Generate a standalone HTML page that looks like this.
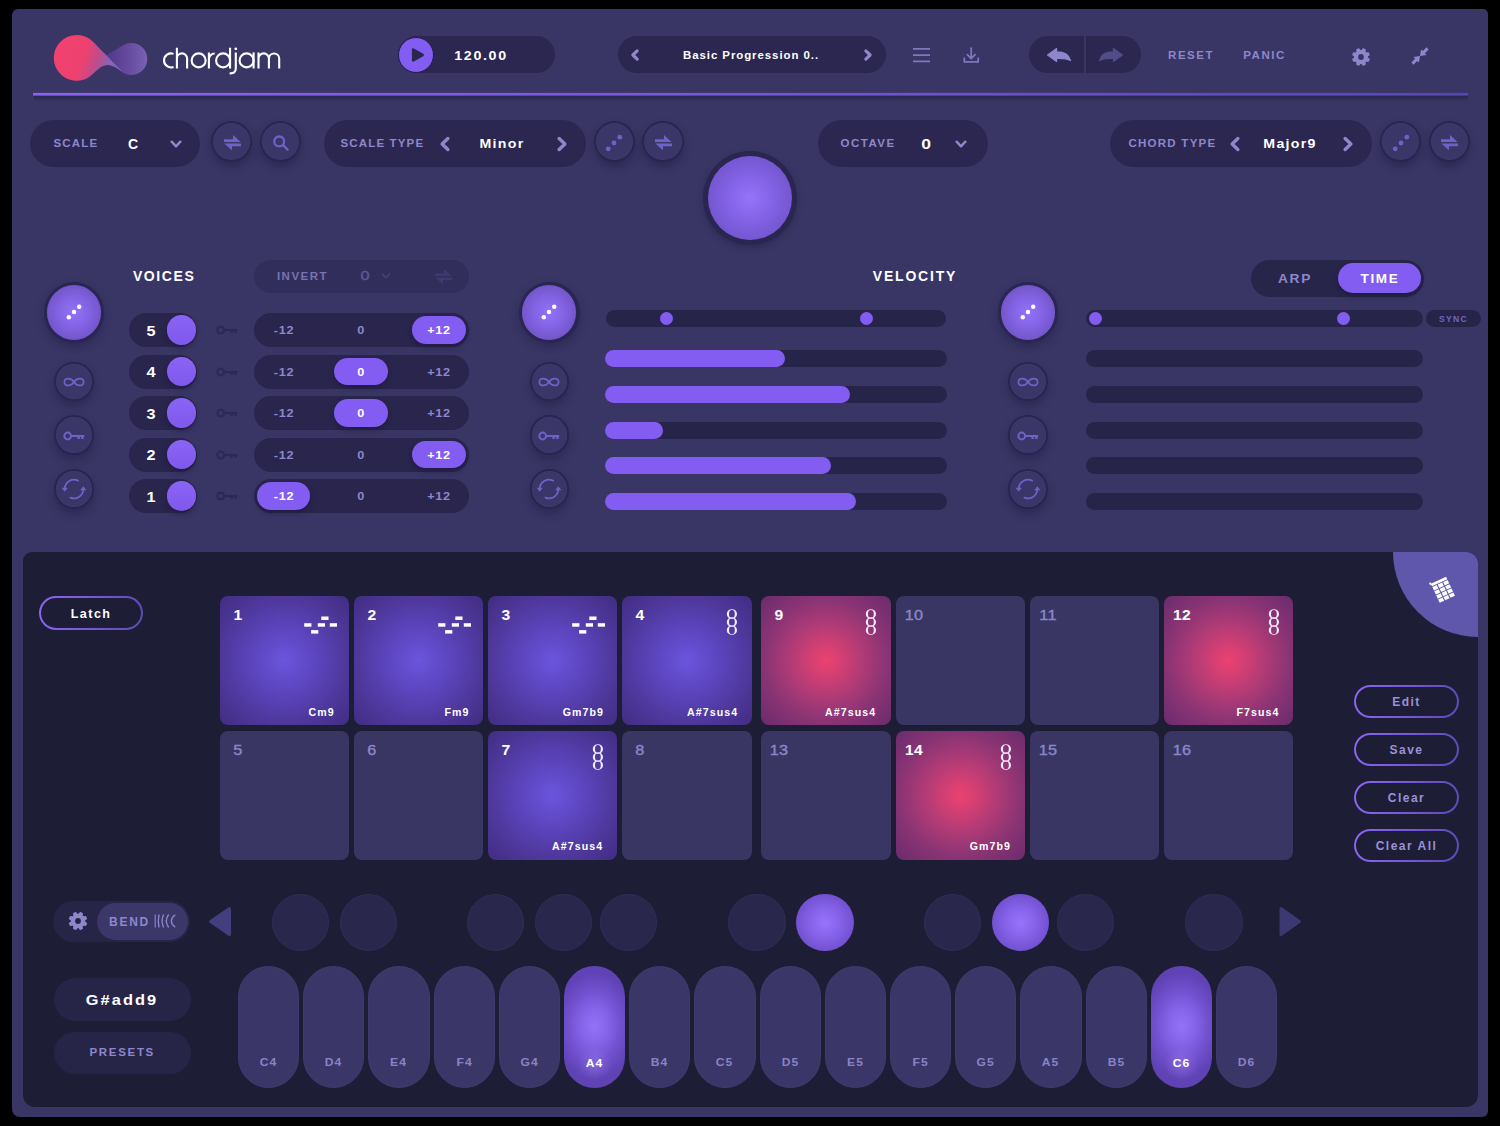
<!DOCTYPE html><html><head><meta charset="utf-8"><title>chordjam</title><style>
*{box-sizing:border-box;margin:0;padding:0}
html,body{width:1500px;height:1126px;background:#000;overflow:hidden}
body{position:relative;font-family:"Liberation Sans",sans-serif;color:#fff}
.abs{position:absolute}
#win{position:absolute;left:12px;top:9px;width:1476px;height:1108px;background:#393665;border-radius:6px 5px 6px 8px}
.pill{position:absolute;background:#2b2750;border-radius:100px}
.t{position:absolute;white-space:nowrap;font-weight:bold;line-height:1;transform:translate(-50%,-50%)}
.tl{position:absolute;white-space:nowrap;font-weight:bold;line-height:1;transform:translate(0,-50%)}
.mut{color:#8e87cc}
.rb{position:absolute;border-radius:50%;background:#292551;box-shadow:0 5px 9px rgba(28,24,62,.42)}
.rb i{position:absolute;left:2.1px;top:2.1px;right:2.1px;bottom:2.1px;border-radius:50%;background:#3a3667;box-shadow:inset 0 0 0 1px rgba(72,67,122,.3)}
.bigb{position:absolute;border-radius:50%;background:#2a2652;box-shadow:0 4px 8px rgba(28,24,62,.38)}
.bigb i{position:absolute;left:3.2px;top:3.2px;right:3.2px;bottom:3.2px;border-radius:50%;background:radial-gradient(circle at 50% 50%,#9371f9 0%,#8565e6 35%,#7557cd 68%,#664bb6 100%)}
.acc{background:#835cf1}
.bar{position:absolute;background:#27244a;border-radius:100px;height:17px}
.fill{position:absolute;background:#835cf1;border-radius:100px;height:17px}
.pad{position:absolute;width:129.4px;height:129.2px;border-radius:8px;background:#393664}
.pad.p{background:radial-gradient(circle at 50% 50%,#6b55dd 0%,#5c45be 35%,#4e389c 68%,#402d82 100%)}
.pad.r{background:radial-gradient(circle at 50% 50%,#eb4270 0%,#d43f73 17%,#b03b76 40%,#8b3474 66%,#6a2b6d 100%)}
.pad .n{position:absolute;left:18px;top:19px;transform:translate(-50%,-50%) scaleX(1.12);line-height:1;font-size:14.5px;letter-spacing:.3px;color:#8d87c9;-webkit-text-stroke:.35px #8d87c9;white-space:nowrap}
.pad.p .n,.pad.r .n{color:#fff;font-weight:bold;font-size:14px;-webkit-text-stroke:0}
.pad .c{position:absolute;right:14px;bottom:7.4px;font-weight:bold;font-size:10px;letter-spacing:1px;color:#fff;transform-origin:100% 50%;transform:scaleX(1.06)}
.ob{position:absolute;border:2px solid transparent;background:linear-gradient(#1e1d36,#1e1d36) padding-box,linear-gradient(100deg,#8d67f3 0%,#7657dc 50%,#5d4bb4 100%) border-box;border-radius:100px;color:#9a92d8;font-weight:bold;font-size:12px;letter-spacing:1.5px;text-align:center}
.bk{position:absolute;width:57.4px;height:57.4px;border-radius:50%;background:#2a274d;border:1px solid #302d57}
.bk.on{border:none;background:radial-gradient(circle at 50% 50%,#9673fb 0%,#8562e8 38%,#7150d0 72%,#5f43b3 100%)}
.wk{position:absolute;width:61.2px;height:121.5px;border-radius:31px;background:#3a3668;border:1px solid #3f3b6e;top:966px}
.wk.on{border:none;background:radial-gradient(circle 17px at 50% 80%,rgba(170,150,235,.32),rgba(170,150,235,0) 100%),radial-gradient(ellipse 40px 54px at 50% 49%,#9472f8 0%,#8563e8 35%,#7251d0 65%,#5f42b4 100%)}
.wk span{position:absolute;left:0;right:0;bottom:18.6px;transform:scaleX(1.1);text-align:center;font-weight:bold;font-size:11px;letter-spacing:1px;color:#8a83c6}
.wk.on span{color:#fff}
</style></head><body>
<div id="win"></div>
<svg class="abs" style="left:45px;top:25px" width="120" height="65" viewBox="45 25 120 65"><defs>
<linearGradient id="lgp" x1="55" x2="122" y1="47" y2="70" gradientUnits="userSpaceOnUse"><stop offset="0" stop-color="#f2426f"/><stop offset=".42" stop-color="#ee416f"/><stop offset=".62" stop-color="#c04c8a"/><stop offset=".8" stop-color="#8a63b4"/><stop offset="1" stop-color="#7b6cc4"/></linearGradient>
<linearGradient id="lgv" x1="106" x2="148" y1="0" y2="0" gradientUnits="userSpaceOnUse"><stop offset="0" stop-color="#4e378c"/><stop offset=".45" stop-color="#63479a"/><stop offset="1" stop-color="#7a62b4"/></linearGradient></defs>
<path d="M106.4 55.3L123 45.3A16 16 0 1 1 121 71.2Z" fill="url(#lgv)"/>
<path d="M89.8 39.1A22.9 22.9 0 1 0 89.2 77.1C95.5 72.5 100 65.3 107.3 65C114 65 117 69 122.5 71.6C117 67 112 61 106.4 55.3C100.5 49.7 95.3 43.5 89.8 39.1Z" fill="url(#lgp)"/></svg>
<svg class="abs" style="left:155px;top:40px" width="135" height="40" viewBox="155 40 135 40"><g fill="none" stroke="#fff" stroke-width="2.1">
<path d="M173.56 53.86A7 7 0 1 0 173.56 66.94"/>
<path d="M176.9 47.7V68.5M176.9 58.5A5.1 5.1 0 0 1 187.1 58.5V68.5"/>
<circle cx="198.65" cy="60.4" r="7"/>
<path d="M208.9 52.4V68.5M208.9 59.3A5.8 5.8 0 0 1 214.7 53.5"/>
<circle cx="223.1" cy="60.4" r="7"/><path d="M230.05 47.7V68.5"/>
<path d="M235.8 52.4V68.3C235.8 72.3 233.6 73.7 229.6 73.3"/>
<circle cx="246.6" cy="60.4" r="7"/><path d="M253.6 52.4V68.5"/>
<path d="M258.5 52.4V68.5M258.5 58.6A5.2 5.2 0 0 1 268.9 58.6V68.5M268.9 58.6A5.15 5.15 0 0 1 279.2 58.6V68.5"/>
</g><circle cx="235.8" cy="48.8" r="1.4" fill="#fff"/></svg>
<div class="abs" style="left:163px;top:43px;font-size:30px;line-height:34px;color:transparent;letter-spacing:-.6px">chordjam</div>
<div class="pill" style="left:398.4px;top:36.4px;width:156.60000000000002px;height:37.00000000000001px;"></div>
<div class="abs acc" style="left:398px;top:37px;width:36px;height:36px;border-radius:50%;border:1.5px solid #221e44"></div>
<svg class="abs" style="left:409px;top:46px" width="18" height="18" viewBox="0 0 18 18"><path d="M4.2 3.6L13.6 9L4.2 14.4Z" fill="#2a264f" stroke="#2a264f" stroke-width="2.6" stroke-linejoin="round"/></svg>
<div class="t" style="left:480.5px;top:54.8px;font-size:13px;letter-spacing:1.5px;color:#fff;transform:translate(-50%,-50%) scaleX(1.1);">120.00</div>
<div class="pill" style="left:618px;top:36.4px;width:268px;height:37.00000000000001px;"></div>
<svg class="abs" style="left:624.6px;top:45px" width="20" height="20" viewBox="-10 -10 20 20"><path d="M2.4 -4.6L-2.4 0L2.4 4.6" fill="none" stroke="#8e87cc" stroke-width="3.5" stroke-linecap="round" stroke-linejoin="round" transform="scale(0.9)"/></svg>
<svg class="abs" style="left:858.4px;top:45px" width="20" height="20" viewBox="-10 -10 20 20"><path d="M-2.4 -4.6L2.4 0L-2.4 4.6" fill="none" stroke="#8e87cc" stroke-width="3.5" stroke-linecap="round" stroke-linejoin="round" transform="scale(0.9)"/></svg>
<div class="t" style="left:751px;top:54.8px;font-size:11px;letter-spacing:0.9px;color:#fff;transform:translate(-50%,-50%) scaleX(1.04);">Basic Progression 0..</div>
<svg class="abs" style="left:912px;top:46px" width="20" height="18" viewBox="0 0 20 18"><g stroke="#7f78bf" stroke-width="1.7"><path d="M1 2.9H18M1 9.1H18M1 15.3H18"/></g></svg>
<svg class="abs" style="left:962px;top:45px" width="18" height="20" viewBox="0 0 18 20"><g stroke="#7f78bf" stroke-width="1.7" fill="none" stroke-linecap="round" stroke-linejoin="round"><path d="M9.2 3V13.4M5.3 9.6L9.2 13.6L13.1 9.6M2.3 13.2V16.9H16.2V13.2"/></g></svg>
<div class="pill" style="left:1028.8px;top:36.4px;width:112.40000000000009px;height:36.9px;"></div>
<div class="abs" style="left:1084.2px;top:36px;width:1.8px;height:38px;background:#393665"></div>
<svg class="abs" style="left:1046px;top:45px" width="26" height="20" viewBox="0 0 26 20"><path d="M1.6 10L10.6 3.6V6.8C18 6.8 23.3 10 24.6 15.6C21 13.6 17 13.2 10.6 13.4V16.4Z" fill="#8e87cc" stroke="#8e87cc" stroke-width="1.2" stroke-linejoin="round"/></svg>
<svg class="abs" style="left:1098px;top:45px" width="26" height="20" viewBox="0 0 26 20"><path d="M24.4 10L15.4 3.6V6.8C8 6.8 2.7 10 1.4 15.6C5 13.6 9 13.2 15.4 13.4V16.4Z" fill="#524c88" stroke="#524c88" stroke-width="1.2" stroke-linejoin="round"/></svg>
<div class="t" style="left:1191px;top:55.5px;font-size:11.5px;letter-spacing:1.5px;color:#8e87cc;">RESET</div>
<div class="t" style="left:1264.5px;top:55.5px;font-size:11.5px;letter-spacing:1.5px;color:#8e87cc;">PANIC</div>
<svg class="abs" style="left:1349.1px;top:44.5px" width="24" height="24" viewBox="-12 -12 24 24"><path d="M8.22 2.18L7.35 4.27L5.14 3.92L3.92 5.14L4.27 7.35L2.18 8.22L0.86 6.40L-0.86 6.40L-2.18 8.22L-4.27 7.35L-3.92 5.14L-5.14 3.92L-7.35 4.27L-8.22 2.18L-6.40 0.86L-6.40 -0.86L-8.22 -2.18L-7.35 -4.27L-5.14 -3.92L-3.92 -5.14L-4.27 -7.35L-2.18 -8.22L-0.86 -6.40L0.86 -6.40L2.18 -8.22L4.27 -7.35L3.92 -5.14L5.14 -3.92L7.35 -4.27L8.22 -2.18L6.40 -0.86L6.40 0.86Z" fill="#8e87cc" stroke="#8e87cc" stroke-width="1.1" stroke-linejoin="round"/><circle r="2.9" fill="#393665"/></svg>
<svg class="abs" style="left:1408px;top:44px" width="24" height="24" viewBox="0 0 24 24"><g fill="#8e87cc" transform="translate(12 12)"><path d="M0.00 0.00L1.06 -6.58L2.76 -4.88L6.58 -8.70L8.70 -6.58L4.88 -2.76L6.58 -1.06Z"/><path d="M-0.00 -0.00L-1.06 6.58L-2.76 4.88L-6.58 8.70L-8.70 6.58L-4.88 2.76L-6.58 1.06Z"/></g></svg>
<svg class="abs" style="left:30px;top:88px" width="1442" height="16" viewBox="0 0 1442 16"><defs><linearGradient id="tl" x1="0" x2="1"><stop offset="0" stop-color="#8a62f3"/><stop offset=".45" stop-color="#7856de"/><stop offset="1" stop-color="#5846b2"/></linearGradient><linearGradient id="ts" x1="0" x2="0" y1="0" y2="1"><stop offset="0" stop-color="#1c183c" stop-opacity=".6"/><stop offset="1" stop-color="#1c183c" stop-opacity="0"/></linearGradient></defs><rect x="4" y="7.2" width="1434" height="6.5" fill="url(#ts)"/><rect x="3" y="4.9" width="1435" height="2.7" fill="url(#tl)"/></svg>
<div class="pill" style="left:29.8px;top:120.4px;width:170.5px;height:46.400000000000006px;"></div>
<div class="tl" style="left:53.5px;top:144px;font-size:11.5px;letter-spacing:1.15px;color:#8e87cc;">SCALE</div>
<div class="t" style="left:133px;top:143.5px;font-size:14px;letter-spacing:0px;color:#fff;">C</div>
<svg class="abs" style="left:165.5px;top:133.5px" width="20" height="20" viewBox="-10 -10 20 20"><path d="M-4.6 -2.4L0 2.4L4.6 -2.4" fill="none" stroke="#8e87cc" stroke-width="2.6" stroke-linecap="round" stroke-linejoin="round" transform="scale(0.95)"/></svg>
<div class="rb" style="left:211.1px;top:121.0px;width:41.4px;height:41.4px"><i></i></div>
<svg class="abs" style="left:223.8px;top:134.9px" width="17" height="15.4" viewBox="0 0 17 15.4"><g fill="#6c63c8" opacity="1"><path d="M0 4.2H9V0L16.6 6.9H0z"/><path d="M17 11.2H8V15.4L0.4 8.5H17z"/></g></svg>
<div class="rb" style="left:260.1px;top:121.0px;width:41.4px;height:41.4px"><i></i></div>
<svg class="abs" style="left:269px;top:131px" width="24" height="24" viewBox="0 0 24 24"><g fill="none" stroke="#6c63c8" stroke-width="2.3" stroke-linecap="round"><circle cx="10.2" cy="10.4" r="4.9"/><path d="M14 14.2L18.6 18.6"/></g></svg>
<div class="pill" style="left:324px;top:120.4px;width:262px;height:46.400000000000006px;"></div>
<div class="tl" style="left:340.5px;top:144px;font-size:11.5px;letter-spacing:1.15px;color:#8e87cc;">SCALE TYPE</div>
<svg class="abs" style="left:434.5px;top:134px" width="20" height="20" viewBox="-10 -10 20 20"><path d="M2.4 -4.6L-2.4 0L2.4 4.6" fill="none" stroke="#8e87cc" stroke-width="2.8" stroke-linecap="round" stroke-linejoin="round" transform="scale(1.2)"/></svg>
<div class="t" style="left:501.5px;top:143.5px;font-size:13.5px;letter-spacing:1.2px;color:#fff;transform:translate(-50%,-50%) scaleX(1.05);">Minor</div>
<svg class="abs" style="left:551.5px;top:134px" width="20" height="20" viewBox="-10 -10 20 20"><path d="M-2.4 -4.6L2.4 0L-2.4 4.6" fill="none" stroke="#8e87cc" stroke-width="2.8" stroke-linecap="round" stroke-linejoin="round" transform="scale(1.2)"/></svg>
<div class="rb" style="left:593.5px;top:121.1px;width:41.4px;height:41.4px"><i></i></div>
<svg class="abs" style="left:602.2px;top:130.6px" width="24" height="24" viewBox="-12 -12 24 24"><g fill="#6c63c8"><circle cx="5.8" cy="-5.8" r="2.4"/><circle cx="0" cy="0" r="2.4"/><circle cx="-5.8" cy="5.8" r="2.4"/></g></svg>
<div class="rb" style="left:642.3px;top:121.1px;width:41.4px;height:41.4px"><i></i></div>
<svg class="abs" style="left:654.5px;top:134.9px" width="17" height="15.4" viewBox="0 0 17 15.4"><g fill="#6c63c8" opacity="1"><path d="M0 4.2H9V0L16.6 6.9H0z"/><path d="M17 11.2H8V15.4L0.4 8.5H17z"/></g></svg>
<div class="abs" style="left:703px;top:151px;width:94px;height:94px;border-radius:50%;background:#2a2650;box-shadow:0 3px 6px rgba(28,24,62,.35)"></div>
<div class="abs" style="left:708px;top:156px;width:84px;height:84px;border-radius:50%;background:radial-gradient(circle at 50% 50%,#9573fb 0%,#8564e8 35%,#7558d2 68%,#694cbc 100%)"></div>
<div class="pill" style="left:818px;top:120.4px;width:170.29999999999995px;height:46.400000000000006px;"></div>
<div class="tl" style="left:840.5px;top:144px;font-size:11.5px;letter-spacing:1.5px;color:#8e87cc;">OCTAVE</div>
<div class="t" style="left:925.8px;top:143.5px;font-size:14px;letter-spacing:0px;color:#fff;transform:translate(-50%,-50%) scaleX(1.25);">0</div>
<svg class="abs" style="left:950.5px;top:133.5px" width="20" height="20" viewBox="-10 -10 20 20"><path d="M-4.6 -2.4L0 2.4L4.6 -2.4" fill="none" stroke="#8e87cc" stroke-width="2.6" stroke-linecap="round" stroke-linejoin="round" transform="scale(0.95)"/></svg>
<div class="pill" style="left:1110px;top:120.4px;width:262px;height:46.400000000000006px;"></div>
<div class="tl" style="left:1128.5px;top:144px;font-size:11.5px;letter-spacing:1.25px;color:#8e87cc;">CHORD TYPE</div>
<svg class="abs" style="left:1225px;top:134px" width="20" height="20" viewBox="-10 -10 20 20"><path d="M2.4 -4.6L-2.4 0L2.4 4.6" fill="none" stroke="#8e87cc" stroke-width="2.8" stroke-linecap="round" stroke-linejoin="round" transform="scale(1.2)"/></svg>
<div class="t" style="left:1290px;top:143.5px;font-size:13.5px;letter-spacing:1.2px;color:#fff;transform:translate(-50%,-50%) scaleX(1.05);">Major9</div>
<svg class="abs" style="left:1337.5px;top:134px" width="20" height="20" viewBox="-10 -10 20 20"><path d="M-2.4 -4.6L2.4 0L-2.4 4.6" fill="none" stroke="#8e87cc" stroke-width="2.8" stroke-linecap="round" stroke-linejoin="round" transform="scale(1.2)"/></svg>
<div class="rb" style="left:1379.8px;top:121.1px;width:41.4px;height:41.4px"><i></i></div>
<svg class="abs" style="left:1388.5px;top:130.6px" width="24" height="24" viewBox="-12 -12 24 24"><g fill="#6c63c8"><circle cx="5.8" cy="-5.8" r="2.4"/><circle cx="0" cy="0" r="2.4"/><circle cx="-5.8" cy="5.8" r="2.4"/></g></svg>
<div class="rb" style="left:1428.8px;top:121.1px;width:41.4px;height:41.4px"><i></i></div>
<svg class="abs" style="left:1441.0px;top:134.9px" width="17" height="15.4" viewBox="0 0 17 15.4"><g fill="#6c63c8" opacity="1"><path d="M0 4.2H9V0L16.6 6.9H0z"/><path d="M17 11.2H8V15.4L0.4 8.5H17z"/></g></svg>
<div class="bigb" style="left:43.9px;top:282.1px;width:60.6px;height:60.6px"><i></i></div>
<svg class="abs" style="left:62.3px;top:300.4px" width="24" height="24" viewBox="-12 -12 24 24"><g fill="#fff"><circle cx="5.2" cy="-5.2" r="2.25"/><circle cx="0" cy="0" r="2.25"/><circle cx="-5.2" cy="5.2" r="2.25"/></g></svg>
<div class="rb" style="left:54.4px;top:361.8px;width:39.6px;height:39.6px"><i></i></div>
<svg class="abs" style="left:62.2px;top:374px" width="24" height="16" viewBox="-12 -8 24 16"><path d="M0 0C-2.5 -4.2 -9.6 -5 -9.6 0C-9.6 5 -2.5 4.2 0 0C2.5 -4.2 9.6 -5 9.6 0C9.6 5 2.5 4.2 0 0Z" fill="none" stroke="#6c63c8" stroke-width="1.75"/></svg>
<div class="rb" style="left:54.4px;top:415.1px;width:39.6px;height:39.6px"><i></i></div>
<svg class="abs" style="left:62.2px;top:427.6px" width="24" height="16" viewBox="-12 -8 24 16"><g fill="none" stroke="#6c63c8" stroke-width="2"><circle cx="-6.3" cy="0" r="3.4"/><path d="M-2.9 0H10.2"/><path d="M4.6 0.8V3.1M8.4 0.8V3.1" stroke-width="2.4"/></g></svg>
<div class="rb" style="left:54.4px;top:469.1px;width:39.6px;height:39.6px"><i></i></div>
<svg class="abs" style="left:61.2px;top:476.3px" width="26" height="26" viewBox="-13 -13 26 26"><g fill="none" stroke="#6c63c8" stroke-width="1.8" stroke-linecap="round"><path d="M4.2 -8.3A9.3 9.3 0 0 0 -9.3 -0.5"/><path d="M-3.6 8.6A9.3 9.3 0 0 0 9.3 0.5"/></g><g fill="#6c63c8"><path d="M-12.4 -1.2H-6.2L-9.3 2.8Z"/><path d="M12.4 1.2H6.2L9.3 -2.8Z"/></g></svg>
<div class="bigb" style="left:519.0px;top:282.1px;width:60.6px;height:60.6px"><i></i></div>
<svg class="abs" style="left:537.4px;top:300.4px" width="24" height="24" viewBox="-12 -12 24 24"><g fill="#fff"><circle cx="5.2" cy="-5.2" r="2.25"/><circle cx="0" cy="0" r="2.25"/><circle cx="-5.2" cy="5.2" r="2.25"/></g></svg>
<div class="rb" style="left:529.5px;top:361.8px;width:39.6px;height:39.6px"><i></i></div>
<svg class="abs" style="left:537.3px;top:374px" width="24" height="16" viewBox="-12 -8 24 16"><path d="M0 0C-2.5 -4.2 -9.6 -5 -9.6 0C-9.6 5 -2.5 4.2 0 0C2.5 -4.2 9.6 -5 9.6 0C9.6 5 2.5 4.2 0 0Z" fill="none" stroke="#6c63c8" stroke-width="1.75"/></svg>
<div class="rb" style="left:529.5px;top:415.1px;width:39.6px;height:39.6px"><i></i></div>
<svg class="abs" style="left:537.3px;top:427.6px" width="24" height="16" viewBox="-12 -8 24 16"><g fill="none" stroke="#6c63c8" stroke-width="2"><circle cx="-6.3" cy="0" r="3.4"/><path d="M-2.9 0H10.2"/><path d="M4.6 0.8V3.1M8.4 0.8V3.1" stroke-width="2.4"/></g></svg>
<div class="rb" style="left:529.5px;top:469.1px;width:39.6px;height:39.6px"><i></i></div>
<svg class="abs" style="left:536.3px;top:476.3px" width="26" height="26" viewBox="-13 -13 26 26"><g fill="none" stroke="#6c63c8" stroke-width="1.8" stroke-linecap="round"><path d="M4.2 -8.3A9.3 9.3 0 0 0 -9.3 -0.5"/><path d="M-3.6 8.6A9.3 9.3 0 0 0 9.3 0.5"/></g><g fill="#6c63c8"><path d="M-12.4 -1.2H-6.2L-9.3 2.8Z"/><path d="M12.4 1.2H6.2L9.3 -2.8Z"/></g></svg>
<div class="bigb" style="left:997.8px;top:282.1px;width:60.6px;height:60.6px"><i></i></div>
<svg class="abs" style="left:1016.1999999999998px;top:300.4px" width="24" height="24" viewBox="-12 -12 24 24"><g fill="#fff"><circle cx="5.2" cy="-5.2" r="2.25"/><circle cx="0" cy="0" r="2.25"/><circle cx="-5.2" cy="5.2" r="2.25"/></g></svg>
<div class="rb" style="left:1008.3px;top:361.8px;width:39.6px;height:39.6px"><i></i></div>
<svg class="abs" style="left:1016.0999999999999px;top:374px" width="24" height="16" viewBox="-12 -8 24 16"><path d="M0 0C-2.5 -4.2 -9.6 -5 -9.6 0C-9.6 5 -2.5 4.2 0 0C2.5 -4.2 9.6 -5 9.6 0C9.6 5 2.5 4.2 0 0Z" fill="none" stroke="#6c63c8" stroke-width="1.75"/></svg>
<div class="rb" style="left:1008.3px;top:415.1px;width:39.6px;height:39.6px"><i></i></div>
<svg class="abs" style="left:1016.0999999999999px;top:427.6px" width="24" height="16" viewBox="-12 -8 24 16"><g fill="none" stroke="#6c63c8" stroke-width="2"><circle cx="-6.3" cy="0" r="3.4"/><path d="M-2.9 0H10.2"/><path d="M4.6 0.8V3.1M8.4 0.8V3.1" stroke-width="2.4"/></g></svg>
<div class="rb" style="left:1008.3px;top:469.1px;width:39.6px;height:39.6px"><i></i></div>
<svg class="abs" style="left:1015.0999999999999px;top:476.3px" width="26" height="26" viewBox="-13 -13 26 26"><g fill="none" stroke="#6c63c8" stroke-width="1.8" stroke-linecap="round"><path d="M4.2 -8.3A9.3 9.3 0 0 0 -9.3 -0.5"/><path d="M-3.6 8.6A9.3 9.3 0 0 0 9.3 0.5"/></g><g fill="#6c63c8"><path d="M-12.4 -1.2H-6.2L-9.3 2.8Z"/><path d="M12.4 1.2H6.2L9.3 -2.8Z"/></g></svg>
<div class="t" style="left:164.2px;top:276px;font-size:14px;letter-spacing:1.6px;color:#fff;">VOICES</div>
<div class="pill" style="left:253.7px;top:259.6px;width:215.5px;height:33.599999999999966px;background:#322e5c"></div>
<div class="t" style="left:302.5px;top:276.6px;font-size:11.5px;letter-spacing:1.5px;color:#7a73af;">INVERT</div>
<div class="t" style="left:364.5px;top:275.2px;font-size:13px;letter-spacing:0px;color:#5f5994;transform:translate(-50%,-50%) scaleX(1.25);font-weight:normal;-webkit-text-stroke:.4px #5f5994">0</div>
<svg class="abs" style="left:376px;top:266.2px" width="20" height="20" viewBox="-10 -10 20 20"><path d="M-4.6 -2.4L0 2.4L4.6 -2.4" fill="none" stroke="#453f7a" stroke-width="2.4" stroke-linecap="round" stroke-linejoin="round" transform="scale(0.75)"/></svg>
<svg class="abs" style="left:434.5px;top:268.9px" width="17" height="15.4" viewBox="0 0 17 15.4"><g fill="#3e3971" opacity="1"><path d="M0 4.2H9V0L16.6 6.9H0z"/><path d="M17 11.2H8V15.4L0.4 8.5H17z"/></g></svg>
<div class="pill" style="left:128.5px;top:313px;width:68.5px;height:34px;background:#29254c"></div>
<div class="t" style="left:150.5px;top:330.5px;font-size:14.5px;letter-spacing:0px;color:#fff;transform:translate(-50%,-50%) scaleX(1.12);">5</div>
<div class="abs" style="left:166.7px;top:315.2px;width:29.6px;height:29.6px;border-radius:50%;background:linear-gradient(180deg,#8a64f5,#7f58ec);box-shadow:0 3px 5px rgba(24,20,56,.5)"></div>
<svg class="abs" style="left:214.5px;top:322px" width="24" height="16" viewBox="-12 -8 24 16"><g fill="none" stroke="#2d2957" stroke-width="2.2"><circle cx="-6.3" cy="0" r="3.4"/><path d="M-2.9 0H10.2"/><path d="M4.6 0.8V3.1M8.4 0.8V3.1" stroke-width="2.4"/></g></svg>
<div class="pill" style="left:253.5px;top:313px;width:215.7px;height:34px;background:#29254c"></div>
<div class="abs acc" style="left:412.4px;top:316.3px;width:53.6px;height:27.4px;border-radius:14px;box-shadow:0 3px 5px rgba(24,20,56,.5)"></div>
<div class="t" style="left:283.5px;top:331.2px;font-size:11.5px;letter-spacing:0.6px;color:#8e87cc;transform:translate(-50%,-50%) scaleX(1.1);">-12</div>
<div class="t" style="left:361px;top:331.2px;font-size:11.5px;letter-spacing:0.6px;color:#8e87cc;transform:translate(-50%,-50%) scaleX(1.1);">0</div>
<div class="t" style="left:439.2px;top:331.2px;font-size:11.5px;letter-spacing:0.6px;color:#fff;transform:translate(-50%,-50%) scaleX(1.1);">+12</div>
<div class="pill" style="left:128.5px;top:354.5px;width:68.5px;height:34.0px;background:#29254c"></div>
<div class="t" style="left:150.5px;top:372.0px;font-size:14.5px;letter-spacing:0px;color:#fff;transform:translate(-50%,-50%) scaleX(1.12);">4</div>
<div class="abs" style="left:166.7px;top:356.7px;width:29.6px;height:29.6px;border-radius:50%;background:linear-gradient(180deg,#8a64f5,#7f58ec);box-shadow:0 3px 5px rgba(24,20,56,.5)"></div>
<svg class="abs" style="left:214.5px;top:363.5px" width="24" height="16" viewBox="-12 -8 24 16"><g fill="none" stroke="#2d2957" stroke-width="2.2"><circle cx="-6.3" cy="0" r="3.4"/><path d="M-2.9 0H10.2"/><path d="M4.6 0.8V3.1M8.4 0.8V3.1" stroke-width="2.4"/></g></svg>
<div class="pill" style="left:253.5px;top:354.5px;width:215.7px;height:34.0px;background:#29254c"></div>
<div class="abs acc" style="left:334.2px;top:357.8px;width:53.6px;height:27.4px;border-radius:14px;box-shadow:0 3px 5px rgba(24,20,56,.5)"></div>
<div class="t" style="left:283.5px;top:372.7px;font-size:11.5px;letter-spacing:0.6px;color:#8e87cc;transform:translate(-50%,-50%) scaleX(1.1);">-12</div>
<div class="t" style="left:361px;top:372.7px;font-size:11.5px;letter-spacing:0.6px;color:#fff;transform:translate(-50%,-50%) scaleX(1.1);">0</div>
<div class="t" style="left:439.2px;top:372.7px;font-size:11.5px;letter-spacing:0.6px;color:#8e87cc;transform:translate(-50%,-50%) scaleX(1.1);">+12</div>
<div class="pill" style="left:128.5px;top:396px;width:68.5px;height:34px;background:#29254c"></div>
<div class="t" style="left:150.5px;top:413.5px;font-size:14.5px;letter-spacing:0px;color:#fff;transform:translate(-50%,-50%) scaleX(1.12);">3</div>
<div class="abs" style="left:166.7px;top:398.2px;width:29.6px;height:29.6px;border-radius:50%;background:linear-gradient(180deg,#8a64f5,#7f58ec);box-shadow:0 3px 5px rgba(24,20,56,.5)"></div>
<svg class="abs" style="left:214.5px;top:405px" width="24" height="16" viewBox="-12 -8 24 16"><g fill="none" stroke="#2d2957" stroke-width="2.2"><circle cx="-6.3" cy="0" r="3.4"/><path d="M-2.9 0H10.2"/><path d="M4.6 0.8V3.1M8.4 0.8V3.1" stroke-width="2.4"/></g></svg>
<div class="pill" style="left:253.5px;top:396px;width:215.7px;height:34px;background:#29254c"></div>
<div class="abs acc" style="left:334.2px;top:399.3px;width:53.6px;height:27.4px;border-radius:14px;box-shadow:0 3px 5px rgba(24,20,56,.5)"></div>
<div class="t" style="left:283.5px;top:414.2px;font-size:11.5px;letter-spacing:0.6px;color:#8e87cc;transform:translate(-50%,-50%) scaleX(1.1);">-12</div>
<div class="t" style="left:361px;top:414.2px;font-size:11.5px;letter-spacing:0.6px;color:#fff;transform:translate(-50%,-50%) scaleX(1.1);">0</div>
<div class="t" style="left:439.2px;top:414.2px;font-size:11.5px;letter-spacing:0.6px;color:#8e87cc;transform:translate(-50%,-50%) scaleX(1.1);">+12</div>
<div class="pill" style="left:128.5px;top:437.5px;width:68.5px;height:34.0px;background:#29254c"></div>
<div class="t" style="left:150.5px;top:455.0px;font-size:14.5px;letter-spacing:0px;color:#fff;transform:translate(-50%,-50%) scaleX(1.12);">2</div>
<div class="abs" style="left:166.7px;top:439.7px;width:29.6px;height:29.6px;border-radius:50%;background:linear-gradient(180deg,#8a64f5,#7f58ec);box-shadow:0 3px 5px rgba(24,20,56,.5)"></div>
<svg class="abs" style="left:214.5px;top:446.5px" width="24" height="16" viewBox="-12 -8 24 16"><g fill="none" stroke="#2d2957" stroke-width="2.2"><circle cx="-6.3" cy="0" r="3.4"/><path d="M-2.9 0H10.2"/><path d="M4.6 0.8V3.1M8.4 0.8V3.1" stroke-width="2.4"/></g></svg>
<div class="pill" style="left:253.5px;top:437.5px;width:215.7px;height:34.0px;background:#29254c"></div>
<div class="abs acc" style="left:412.4px;top:440.8px;width:53.6px;height:27.4px;border-radius:14px;box-shadow:0 3px 5px rgba(24,20,56,.5)"></div>
<div class="t" style="left:283.5px;top:455.7px;font-size:11.5px;letter-spacing:0.6px;color:#8e87cc;transform:translate(-50%,-50%) scaleX(1.1);">-12</div>
<div class="t" style="left:361px;top:455.7px;font-size:11.5px;letter-spacing:0.6px;color:#8e87cc;transform:translate(-50%,-50%) scaleX(1.1);">0</div>
<div class="t" style="left:439.2px;top:455.7px;font-size:11.5px;letter-spacing:0.6px;color:#fff;transform:translate(-50%,-50%) scaleX(1.1);">+12</div>
<div class="pill" style="left:128.5px;top:479px;width:68.5px;height:34px;background:#29254c"></div>
<div class="t" style="left:150.5px;top:496.5px;font-size:14.5px;letter-spacing:0px;color:#fff;transform:translate(-50%,-50%) scaleX(1.12);">1</div>
<div class="abs" style="left:166.7px;top:481.2px;width:29.6px;height:29.6px;border-radius:50%;background:linear-gradient(180deg,#8a64f5,#7f58ec);box-shadow:0 3px 5px rgba(24,20,56,.5)"></div>
<svg class="abs" style="left:214.5px;top:488px" width="24" height="16" viewBox="-12 -8 24 16"><g fill="none" stroke="#2d2957" stroke-width="2.2"><circle cx="-6.3" cy="0" r="3.4"/><path d="M-2.9 0H10.2"/><path d="M4.6 0.8V3.1M8.4 0.8V3.1" stroke-width="2.4"/></g></svg>
<div class="pill" style="left:253.5px;top:479px;width:215.7px;height:34px;background:#29254c"></div>
<div class="abs acc" style="left:256.7px;top:482.3px;width:53.6px;height:27.4px;border-radius:14px;box-shadow:0 3px 5px rgba(24,20,56,.5)"></div>
<div class="t" style="left:283.5px;top:497.2px;font-size:11.5px;letter-spacing:0.6px;color:#fff;transform:translate(-50%,-50%) scaleX(1.1);">-12</div>
<div class="t" style="left:361px;top:497.2px;font-size:11.5px;letter-spacing:0.6px;color:#8e87cc;transform:translate(-50%,-50%) scaleX(1.1);">0</div>
<div class="t" style="left:439.2px;top:497.2px;font-size:11.5px;letter-spacing:0.6px;color:#8e87cc;transform:translate(-50%,-50%) scaleX(1.1);">+12</div>
<div class="t" style="left:915px;top:276px;font-size:14px;letter-spacing:1.8px;color:#fff;">VELOCITY</div>
<div class="bar" style="left:606px;top:310px;width:340px;height:17px"></div>
<div class="abs acc" style="left:659.5px;top:312px;width:13px;height:13px;border-radius:50%"></div>
<div class="abs acc" style="left:859.5px;top:312px;width:13px;height:13px;border-radius:50%"></div>
<div class="bar" style="left:605px;top:349.6px;width:342px"></div>
<div class="fill" style="left:605px;top:349.6px;width:180px"></div>
<div class="bar" style="left:605px;top:385.6px;width:342px"></div>
<div class="fill" style="left:605px;top:385.6px;width:245px"></div>
<div class="bar" style="left:605px;top:421.6px;width:342px"></div>
<div class="fill" style="left:605px;top:421.6px;width:58px"></div>
<div class="bar" style="left:605px;top:457.1px;width:342px"></div>
<div class="fill" style="left:605px;top:457.1px;width:226px"></div>
<div class="bar" style="left:605px;top:492.6px;width:342px"></div>
<div class="fill" style="left:605px;top:492.6px;width:251px"></div>
<div class="pill" style="left:1250.5px;top:259.8px;width:173.5px;height:37.0px;background:#28254b"></div>
<div class="t" style="left:1295px;top:277.9px;font-size:13px;letter-spacing:1.6px;color:#8e87cc;transform:translate(-50%,-50%) scaleX(1.06);">ARP</div>
<div class="abs acc" style="left:1338px;top:263px;width:83px;height:30px;border-radius:15px;box-shadow:0 3px 5px rgba(24,20,56,.5)"></div>
<div class="t" style="left:1379.5px;top:277.9px;font-size:13px;letter-spacing:1.6px;color:#fff;transform:translate(-50%,-50%) scaleX(1.04);">TIME</div>
<div class="bar" style="left:1086px;top:310px;width:337px;height:17px"></div>
<div class="abs acc" style="left:1089.0px;top:312px;width:13px;height:13px;border-radius:50%"></div>
<div class="abs acc" style="left:1337.0px;top:312px;width:13px;height:13px;border-radius:50%"></div>
<div class="bar" style="left:1426px;top:310px;width:55px;height:17px"></div>
<div class="t" style="left:1453.5px;top:319px;font-size:8.5px;letter-spacing:1.4px;color:#6f67c4;">SYNC</div>
<div class="bar" style="left:1086px;top:349.5px;width:337px;height:17px"></div>
<div class="bar" style="left:1086px;top:385.5px;width:337px;height:17px"></div>
<div class="bar" style="left:1086px;top:421.5px;width:337px;height:17px"></div>
<div class="bar" style="left:1086px;top:457.0px;width:337px;height:17px"></div>
<div class="bar" style="left:1086px;top:492.5px;width:337px;height:17px"></div>
<div class="abs" style="left:23px;top:552px;width:1455px;height:555px;background:#1e1d36;border-radius:9px 12px 12px 12px;overflow:hidden"><div class="abs" style="left:1370px;top:-85px;width:170px;height:170px;border-radius:50%;background:#5e57ab"></div></div>
<svg class="abs" style="left:1426px;top:573px" width="34" height="34" viewBox="0 0 34 34"><g transform="translate(17 17) rotate(-25)" fill="#fff"><rect x="-8.4" y="-10.8" width="16.8" height="2.8"/><rect x="-9.6" y="-12.2" width="1.6" height="2.4"/><rect x="-8.40" y="-7.10" width="4.9" height="3.7"/><rect x="-2.45" y="-7.10" width="4.9" height="3.7"/><rect x="3.50" y="-7.10" width="4.9" height="3.7"/><rect x="-8.40" y="-2.55" width="4.9" height="3.7"/><rect x="-2.45" y="-2.55" width="4.9" height="3.7"/><rect x="3.50" y="-2.55" width="4.9" height="3.7"/><rect x="-8.40" y="2.00" width="4.9" height="3.7"/><rect x="-2.45" y="2.00" width="4.9" height="3.7"/><rect x="3.50" y="2.00" width="4.9" height="3.7"/><rect x="-8.40" y="6.55" width="4.9" height="3.7"/><rect x="-2.45" y="6.55" width="4.9" height="3.7"/><rect x="3.50" y="6.55" width="4.9" height="3.7"/></g></svg>
<div class="ob" style="left:39.3px;top:596.4px;width:103.6px;height:34px;line-height:32.5px;color:#fff;font-size:12.5px">Latch</div>
<div class="pad p" style="left:219.5px;top:596.2px"><div class="n">1</div><div class="c">Cm9</div><svg class="abs" style="left:0;top:0" width="129" height="45" viewBox="0 0 129 45"><g fill="#fff"><rect x="101.3" y="20.5" width="7.2" height="3.5"/><rect x="84.2" y="27.2" width="7.2" height="3.5"/><rect x="97.8" y="27.2" width="7.2" height="3.5"/><rect x="109.8" y="27.2" width="7.2" height="3.5"/><rect x="91.1" y="34.1" width="7.2" height="3.5"/></g></svg></div>
<div class="pad p" style="left:353.8px;top:596.2px"><div class="n">2</div><div class="c">Fm9</div><svg class="abs" style="left:0;top:0" width="129" height="45" viewBox="0 0 129 45"><g fill="#fff"><rect x="101.3" y="20.5" width="7.2" height="3.5"/><rect x="84.2" y="27.2" width="7.2" height="3.5"/><rect x="97.8" y="27.2" width="7.2" height="3.5"/><rect x="109.8" y="27.2" width="7.2" height="3.5"/><rect x="91.1" y="34.1" width="7.2" height="3.5"/></g></svg></div>
<div class="pad p" style="left:488.1px;top:596.2px"><div class="n">3</div><div class="c">Gm7b9</div><svg class="abs" style="left:0;top:0" width="129" height="45" viewBox="0 0 129 45"><g fill="#fff"><rect x="101.3" y="20.5" width="7.2" height="3.5"/><rect x="84.2" y="27.2" width="7.2" height="3.5"/><rect x="97.8" y="27.2" width="7.2" height="3.5"/><rect x="109.8" y="27.2" width="7.2" height="3.5"/><rect x="91.1" y="34.1" width="7.2" height="3.5"/></g></svg></div>
<div class="pad p" style="left:622.4px;top:596.2px"><div class="n">4</div><div class="c">A#7sus4</div><svg class="abs" style="left:0;top:0" width="129" height="45" viewBox="0 0 129 45"><g fill="#f3edff"><path d="M104.8 18.05A5.1 4.9 0 1 0 115 18.05A5.1 4.9 0 1 0 104.8 18.05ZM107 18.05A2.9 4.05 0 1 0 112.8 18.05A2.9 4.05 0 1 0 107 18.05Z" fill-rule="evenodd"/><path d="M104.8 26.1A5.1 4.9 0 1 0 115 26.1A5.1 4.9 0 1 0 104.8 26.1ZM107 26.1A2.9 4.05 0 1 0 112.8 26.1A2.9 4.05 0 1 0 107 26.1Z" fill-rule="evenodd"/><path d="M104.8 34.15A5.1 4.9 0 1 0 115 34.15A5.1 4.9 0 1 0 104.8 34.15ZM107 34.15A2.9 4.05 0 1 0 112.8 34.15A2.9 4.05 0 1 0 107 34.15Z" fill-rule="evenodd"/></g></svg></div>
<div class="pad r" style="left:761.2px;top:596.2px"><div class="n">9</div><div class="c">A#7sus4</div><svg class="abs" style="left:0;top:0" width="129" height="45" viewBox="0 0 129 45"><g fill="#f3edff"><path d="M104.8 18.05A5.1 4.9 0 1 0 115 18.05A5.1 4.9 0 1 0 104.8 18.05ZM107 18.05A2.9 4.05 0 1 0 112.8 18.05A2.9 4.05 0 1 0 107 18.05Z" fill-rule="evenodd"/><path d="M104.8 26.1A5.1 4.9 0 1 0 115 26.1A5.1 4.9 0 1 0 104.8 26.1ZM107 26.1A2.9 4.05 0 1 0 112.8 26.1A2.9 4.05 0 1 0 107 26.1Z" fill-rule="evenodd"/><path d="M104.8 34.15A5.1 4.9 0 1 0 115 34.15A5.1 4.9 0 1 0 104.8 34.15ZM107 34.15A2.9 4.05 0 1 0 112.8 34.15A2.9 4.05 0 1 0 107 34.15Z" fill-rule="evenodd"/></g></svg></div>
<div class="pad " style="left:895.5px;top:596.2px"><div class="n">10</div></div>
<div class="pad " style="left:1029.8px;top:596.2px"><div class="n">11</div></div>
<div class="pad r" style="left:1164.1px;top:596.2px"><div class="n">12</div><div class="c">F7sus4</div><svg class="abs" style="left:0;top:0" width="129" height="45" viewBox="0 0 129 45"><g fill="#f3edff"><path d="M104.8 18.05A5.1 4.9 0 1 0 115 18.05A5.1 4.9 0 1 0 104.8 18.05ZM107 18.05A2.9 4.05 0 1 0 112.8 18.05A2.9 4.05 0 1 0 107 18.05Z" fill-rule="evenodd"/><path d="M104.8 26.1A5.1 4.9 0 1 0 115 26.1A5.1 4.9 0 1 0 104.8 26.1ZM107 26.1A2.9 4.05 0 1 0 112.8 26.1A2.9 4.05 0 1 0 107 26.1Z" fill-rule="evenodd"/><path d="M104.8 34.15A5.1 4.9 0 1 0 115 34.15A5.1 4.9 0 1 0 104.8 34.15ZM107 34.15A2.9 4.05 0 1 0 112.8 34.15A2.9 4.05 0 1 0 107 34.15Z" fill-rule="evenodd"/></g></svg></div>
<div class="pad " style="left:219.5px;top:730.5px"><div class="n">5</div></div>
<div class="pad " style="left:353.8px;top:730.5px"><div class="n">6</div></div>
<div class="pad p" style="left:488.1px;top:730.5px"><div class="n">7</div><div class="c">A#7sus4</div><svg class="abs" style="left:0;top:0" width="129" height="45" viewBox="0 0 129 45"><g fill="#f3edff"><path d="M104.8 18.05A5.1 4.9 0 1 0 115 18.05A5.1 4.9 0 1 0 104.8 18.05ZM107 18.05A2.9 4.05 0 1 0 112.8 18.05A2.9 4.05 0 1 0 107 18.05Z" fill-rule="evenodd"/><path d="M104.8 26.1A5.1 4.9 0 1 0 115 26.1A5.1 4.9 0 1 0 104.8 26.1ZM107 26.1A2.9 4.05 0 1 0 112.8 26.1A2.9 4.05 0 1 0 107 26.1Z" fill-rule="evenodd"/><path d="M104.8 34.15A5.1 4.9 0 1 0 115 34.15A5.1 4.9 0 1 0 104.8 34.15ZM107 34.15A2.9 4.05 0 1 0 112.8 34.15A2.9 4.05 0 1 0 107 34.15Z" fill-rule="evenodd"/></g></svg></div>
<div class="pad " style="left:622.4px;top:730.5px"><div class="n">8</div></div>
<div class="pad " style="left:761.2px;top:730.5px"><div class="n">13</div></div>
<div class="pad r" style="left:895.5px;top:730.5px"><div class="n">14</div><div class="c">Gm7b9</div><svg class="abs" style="left:0;top:0" width="129" height="45" viewBox="0 0 129 45"><g fill="#f3edff"><path d="M104.8 18.05A5.1 4.9 0 1 0 115 18.05A5.1 4.9 0 1 0 104.8 18.05ZM107 18.05A2.9 4.05 0 1 0 112.8 18.05A2.9 4.05 0 1 0 107 18.05Z" fill-rule="evenodd"/><path d="M104.8 26.1A5.1 4.9 0 1 0 115 26.1A5.1 4.9 0 1 0 104.8 26.1ZM107 26.1A2.9 4.05 0 1 0 112.8 26.1A2.9 4.05 0 1 0 107 26.1Z" fill-rule="evenodd"/><path d="M104.8 34.15A5.1 4.9 0 1 0 115 34.15A5.1 4.9 0 1 0 104.8 34.15ZM107 34.15A2.9 4.05 0 1 0 112.8 34.15A2.9 4.05 0 1 0 107 34.15Z" fill-rule="evenodd"/></g></svg></div>
<div class="pad " style="left:1029.8px;top:730.5px"><div class="n">15</div></div>
<div class="pad " style="left:1164.1px;top:730.5px"><div class="n">16</div></div>
<div class="ob" style="left:1354px;top:684.5px;width:105px;height:33px;line-height:30px">Edit</div>
<div class="ob" style="left:1354px;top:732.5px;width:105px;height:33px;line-height:30px">Save</div>
<div class="ob" style="left:1354px;top:780.5px;width:105px;height:33px;line-height:30px">Clear</div>
<div class="ob" style="left:1354px;top:828.5px;width:105px;height:33px;line-height:30px">Clear All</div>
<div class="pill" style="left:53.3px;top:901px;width:136.8px;height:40.89999999999998px;background:#272547"></div>
<svg class="abs" style="left:65.7px;top:909.3px" width="24" height="24" viewBox="-12 -12 24 24"><path d="M8.51 2.26L7.61 4.42L5.32 4.06L4.06 5.32L4.42 7.61L2.26 8.51L0.89 6.63L-0.89 6.63L-2.26 8.51L-4.42 7.61L-4.06 5.32L-5.32 4.06L-7.61 4.42L-8.51 2.26L-6.63 0.89L-6.63 -0.89L-8.51 -2.26L-7.61 -4.42L-5.32 -4.06L-4.06 -5.32L-4.42 -7.61L-2.26 -8.51L-0.89 -6.63L0.89 -6.63L2.26 -8.51L4.42 -7.61L4.06 -5.32L5.32 -4.06L7.61 -4.42L8.51 -2.26L6.63 -0.89L6.63 0.89Z" fill="#8e87cc" stroke="#8e87cc" stroke-width="1.1" stroke-linejoin="round"/><circle r="2.9" fill="#272547"/></svg>
<div class="pill" style="left:96.5px;top:903.3px;width:91.80000000000001px;height:36.80000000000007px;background:#3b3769"></div>
<div class="t" style="left:129.5px;top:921.8px;font-size:12px;letter-spacing:1.7px;color:#8e87cc;">BEND</div>
<svg class="abs" style="left:152px;top:912px" width="26" height="18" viewBox="0 0 26 18"><g fill="none" stroke="#8e87cc" stroke-width="1.3"><path d="M3.2 2.5V15.5" stroke-width="1.1"/><path d="M7 2.5Q5.6 9 7 15.5"/><path d="M11.6 2.5Q8.6 9 11.6 15.5"/><path d="M16.6 2.5Q12 9 16.6 15.5"/><path d="M23.2 2.8Q15.4 9 23.2 15.2"/></g></svg>
<svg class="abs" style="left:206px;top:904px" width="28" height="36" viewBox="0 0 28 36"><path d="M23.5 4.6V30.4L4.6 17.4Z" fill="#433e7e" stroke="#433e7e" stroke-width="3" stroke-linejoin="round"/></svg>
<svg class="abs" style="left:1276px;top:904px" width="28" height="36" viewBox="0 0 28 36"><path d="M5 4.6V30.4L23.4 17.4Z" fill="#3c3872" stroke="#3c3872" stroke-width="3" stroke-linejoin="round"/></svg>
<div class="bk" style="left:271.90000000000003px;top:893.7px"></div>
<div class="bk" style="left:340.0px;top:893.7px"></div>
<div class="bk" style="left:466.8px;top:893.7px"></div>
<div class="bk" style="left:534.8px;top:893.7px"></div>
<div class="bk" style="left:599.8px;top:893.7px"></div>
<div class="bk" style="left:728.3px;top:893.7px"></div>
<div class="bk on" style="left:796.3px;top:893.7px"></div>
<div class="bk" style="left:923.8px;top:893.7px"></div>
<div class="bk on" style="left:991.8px;top:893.7px"></div>
<div class="bk" style="left:1056.8px;top:893.7px"></div>
<div class="bk" style="left:1185.3px;top:893.7px"></div>
<div class="wk" style="left:238.0px"><span>C4</span></div>
<div class="wk" style="left:303.2px"><span>D4</span></div>
<div class="wk" style="left:368.4px"><span>E4</span></div>
<div class="wk" style="left:433.6px"><span>F4</span></div>
<div class="wk" style="left:498.8px"><span>G4</span></div>
<div class="wk on" style="left:564.0px"><span>A4</span></div>
<div class="wk" style="left:629.2px"><span>B4</span></div>
<div class="wk" style="left:694.4px"><span>C5</span></div>
<div class="wk" style="left:759.6px"><span>D5</span></div>
<div class="wk" style="left:824.8px"><span>E5</span></div>
<div class="wk" style="left:890.0px"><span>F5</span></div>
<div class="wk" style="left:955.2px"><span>G5</span></div>
<div class="wk" style="left:1020.4px"><span>A5</span></div>
<div class="wk" style="left:1085.6px"><span>B5</span></div>
<div class="wk on" style="left:1150.8px"><span>C6</span></div>
<div class="wk" style="left:1216.0px"><span>D6</span></div>
<div class="pill" style="left:53.8px;top:978px;width:136.8px;height:42.60000000000002px;background:#272547"></div>
<div class="t" style="left:122.2px;top:999.8px;font-size:14.5px;letter-spacing:1.8px;color:#fff;transform:translate(-50%,-50%) scaleX(1.13);">G#add9</div>
<div class="pill" style="left:53.8px;top:1032px;width:136.8px;height:42.200000000000045px;background:#272547"></div>
<div class="t" style="left:122.2px;top:1053.2px;font-size:11.5px;letter-spacing:1.7px;color:#8e87cc;">PRESETS</div>
</body></html>
